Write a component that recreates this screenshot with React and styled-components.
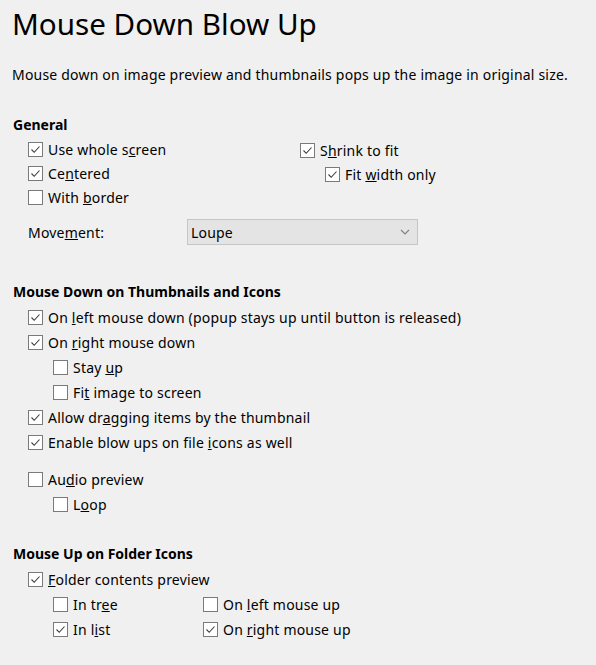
import React from "react";
import styled, { createGlobalStyle } from "styled-components";

const Global = createGlobalStyle`
  body {
    margin: 0;
    background: #f0f0f0;
    font-family: "Noto Sans", "Open Sans", sans-serif;
    font-size: 14px;
    letter-spacing: 0.2px;
    color: #000;
  }
`;

const Page = styled.div`
  width: 596px;
  height: 665px;
  box-sizing: border-box;
  padding: 3px 12px 0 12px;
  overflow: hidden;
`;

const Title = styled.h1`
  margin: 0;
  font-size: 29.6px;
  font-weight: 400;
  letter-spacing: 0;
  line-height: 41px;
`;

const Description = styled.p`
  margin: 21px 0 0 0;
  line-height: 20px;
`;

const Header = styled.h2`
  margin: ${(p) => p.$top}px 0 3px 1px;
  font-size: 14px;
  font-weight: 700;
  letter-spacing: 0;
  line-height: 20px;
`;

const Body = styled.div`
  padding-left: 16px;
`;

const Columns = styled.div`
  display: grid;
  grid-template-columns: ${(p) => p.$first}px 1fr;
`;

const Indent = styled.div`
  padding-left: 25px;
`;

const Row = styled.label`
  display: flex;
  align-items: center;
  gap: 5px;
  height: ${(p) => p.$h || 25}px;
  white-space: nowrap;
`;

const Box = styled.span`
  width: 13px;
  height: 13px;
  flex: none;
  border: 1px solid #7a7a7a;
  background: #fff;
  display: flex;
  align-items: center;
  justify-content: center;
`;

const Gap = styled.div`
  height: ${(p) => p.$h}px;
`;

const FieldRow = styled.div`
  display: grid;
  grid-template-columns: 159px 231px;
  align-items: center;
  margin-top: 10px;
`;

const Select = styled.div`
  height: 26px;
  box-sizing: border-box;
  border: 1px solid #c6c6c6;
  background: #e4e4e4;
  display: flex;
  align-items: center;
  justify-content: space-between;
  padding: 0 7px 0 3px;
`;

const Check = ({ checked, h, children }) => (
  <Row $h={h}>
    <Box>
      {checked && (
        <svg width="11" height="11" viewBox="0 0 11 11">
          <polyline points="1.5,5.5 4.2,8.3 9.5,2.5" fill="none" stroke="#3a3a3a" strokeWidth="1.1" />
        </svg>
      )}
    </Box>
    <span>{children}</span>
  </Row>
);

export default function App() {
  return (
    <Page>
      <Global />
      <Title>Mouse Down Blow Up</Title>
      <Description>
        Mouse down on image preview and thumbnails pops up the image in original size.
      </Description>

      <Header $top={30}>General</Header>
      <Body>
        <Columns $first={272}>
          <div>
            <Check checked h={23.5}>Use whole s<u>c</u>reen</Check>
            <Check checked h={23.5}>Ce<u>n</u>tered</Check>
            <Check h={24}>With <u>b</u>order</Check>
          </div>
          <div>
            <Check checked h={24}>S<u>h</u>rink to fit</Check>
            <Indent>
              <Check checked h={24}>Fit <u>w</u>idth only</Check>
            </Indent>
          </div>
        </Columns>
        <FieldRow>
          <span>Move<u>m</u>ent:</span>
          <Select>
            <span>Loupe</span>
            <svg width="10" height="6" viewBox="0 0 10 6">
              <polyline points="1,1 5,5 9,1" fill="none" stroke="#808080" strokeWidth="1.1" />
            </svg>
          </Select>
        </FieldRow>
      </Body>

      <Header $top={37}>Mouse Down on Thumbnails and Icons</Header>
      <Body>
        <Check checked>On <u>l</u>eft mouse down (popup stays up until button is released)</Check>
        <Check checked>On <u>r</u>ight mouse down</Check>
        <Indent>
          <Check>Stay <u>u</u>p</Check>
          <Check>Fi<u>t</u> image to screen</Check>
        </Indent>
        <Check checked>Allow dr<u>a</u>gging items by the thumbnail</Check>
        <Check checked>Enable blow ups on file <u>i</u>cons as well</Check>
        <Gap $h={12} />
        <Check>Au<u>d</u>io preview</Check>
        <Indent>
          <Check>L<u>o</u>op</Check>
        </Indent>
      </Body>

      <Header $top={27}>Mouse Up on Folder Icons</Header>
      <Body>
        <Check checked><u>F</u>older contents preview</Check>
        <Indent>
          <Columns $first={150}>
            <Check>In tr<u>e</u>e</Check>
            <Check>On <u>l</u>eft mouse up</Check>
            <Check checked>In l<u>i</u>st</Check>
            <Check checked>On <u>r</u>ight mouse up</Check>
          </Columns>
        </Indent>
      </Body>
    </Page>
  );
}
